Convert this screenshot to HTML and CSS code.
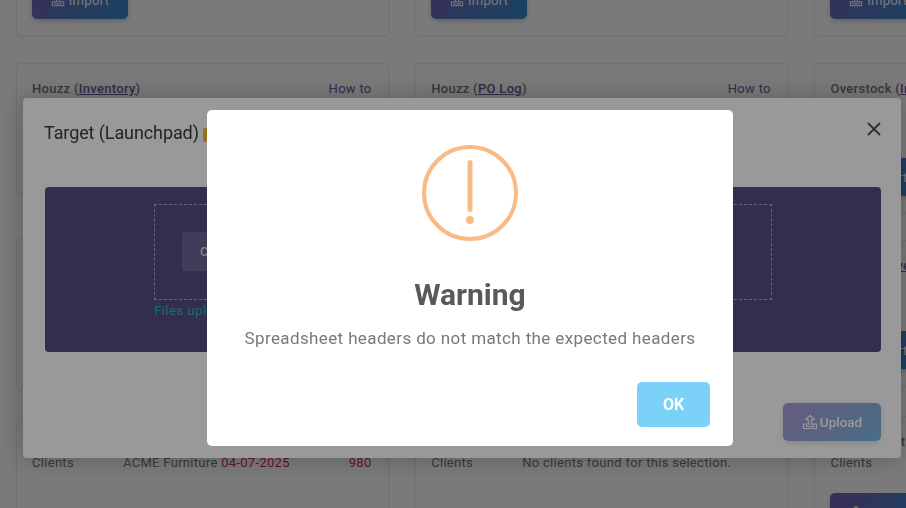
FILE: index.html
```html
<!DOCTYPE html>
<html lang="en">
<head>
    <meta charset="UTF-8">
    <meta name="viewport" content="width=device-width, initial-scale=1.0">
    <title>Imports</title>
    <link rel="stylesheet" href="styles.css">
</head>
<body>
    <svg class="icon-defs" width="0" height="0">
        <symbol id="icon-import" viewBox="0 0 16 16">
            <path d="M8 1.5 3.8 5.5h2.4v4.5h3.6V5.5h2.4z M1.5 10h3v2.5h7V10h3v4.5h-13z" fill="none" stroke="currentColor" stroke-width="1.2" stroke-linejoin="round"/>
        </symbol>
    </svg>

    <main class="board">
        <div class="column">
            <div class="card card-short">
                <div class="card-head"><span>Walmart (<a href="#">Inventory</a>)</span><a class="how-to" href="#">How to</a></div>
                <button class="btn-import"><svg class="icon"><use href="#icon-import"/></svg>Import</button>
            </div>
            <div class="card card-short">
                <div class="card-head"><span>Houzz (<a href="#">Inventory</a>)</span><a class="how-to" href="#">How to</a></div>
                <div class="card-row"><span class="row-label">Clients</span><span>No clients found for this selection.</span></div>
            </div>
            <div class="card card-mid push-down">
                <div class="card-head"><span>Lowes (<a href="#">Inventory</a>)</span><a class="how-to" href="#">How to</a></div>
            </div>
            <div class="card card-last">
                <div class="card-head"><span>Target (<a href="#">Launchpad</a>)</span><a class="how-to" href="#">How to</a></div>
                <div class="card-row"><span class="row-label">Clients</span><span>ACME Furniture <span class="pink">04-07-2025</span></span><span class="row-count pink">980</span></div>
            </div>
        </div>

        <div class="column">
            <div class="card card-short">
                <div class="card-head"><span>Walmart (<a href="#">PO Log</a>)</span><a class="how-to" href="#">How to</a></div>
                <button class="btn-import"><svg class="icon"><use href="#icon-import"/></svg>Import</button>
            </div>
            <div class="card card-short">
                <div class="card-head"><span>Houzz (<a href="#">PO Log</a>)</span><a class="how-to" href="#">How to</a></div>
            </div>
            <div class="card card-mid push-down">
                <div class="card-head"><span>Lowes (<a href="#">PO Log</a>)</span><a class="how-to" href="#">How to</a></div>
            </div>
            <div class="card card-last">
                <div class="card-head"><span>Target (<a href="#">PO Log</a>)</span><a class="how-to" href="#">How to</a></div>
                <div class="card-row"><span class="row-label">Clients</span><span>No clients found for this selection.</span></div>
            </div>
        </div>

        <div class="column">
            <div class="card card-short">
                <div class="card-head"><span>Wayfair (<a href="#">PO Log</a>)</span></div>
                <button class="btn-import"><svg class="icon"><use href="#icon-import"/></svg>Import</button>
            </div>
            <div class="card card-tall">
                <div class="card-head"><span>Overstock (<a href="#">Inventory</a>)</span></div>
                <button class="btn-import"><svg class="icon"><use href="#icon-import"/></svg>Import</button>
            </div>
            <div class="card card-third">
                <div class="card-head"><span>Wayfair (<a href="#">Inventory</a>)</span></div>
                <button class="btn-import"><svg class="icon"><use href="#icon-import"/></svg>Import</button>
            </div>
            <div class="card card-last card-shifted">
                <div class="card-head"><span>Sears Outlet (<a href="#">Inventory</a>)</span></div>
                <div class="card-row"><span class="row-label">Clients</span></div>
                <button class="btn-import btn-low"><svg class="icon"><use href="#icon-import"/></svg>Import</button>
            </div>
        </div>
    </main>

    <div class="backdrop">
        <section class="modal">
            <header class="modal-head">
                <h2 class="modal-title">Target (Launchpad) <span class="badge">Beta</span></h2>
                <svg class="modal-close" viewBox="0 0 14 14"><path d="M1 1l12 12M13 1 1 13" stroke="currentColor" stroke-width="1.8" fill="none"/></svg>
            </header>
            <div class="dropzone">
                <div class="dropzone-box">
                    <button class="btn-choose">Choose File</button>
                </div>
                <p class="dropzone-note">Files uploaded here must be spreadsheets</p>
            </div>
            <footer class="modal-foot">
                <button class="btn-upload"><svg class="icon icon-large"><use href="#icon-import"/></svg>Upload</button>
            </footer>
        </section>
    </div>

    <div class="alert-backdrop">
        <div class="alert">
            <svg class="alert-icon" viewBox="0 0 96 96">
                <circle cx="48" cy="48" r="46" fill="none" stroke="#f8bb86" stroke-width="4"/>
                <path d="M48 17.5v47" stroke="#f8bb86" stroke-width="5" stroke-linecap="round" fill="none"/>
                <circle cx="48" cy="75" r="4" fill="#f8bb86"/>
            </svg>
            <h2 class="alert-title">Warning</h2>
            <p class="alert-text">Spreadsheet headers do not match the expected headers</p>
            <div class="alert-actions"><button class="btn-ok">OK</button></div>
        </div>
    </div>
</body>
</html>
```

FILE: styles.css
```css
* {
    box-sizing: border-box;
}
body {
    font-family: Roboto, "Liberation Sans", sans-serif;
    font-size: 13px;
    line-height: 16px;
    letter-spacing: 0.3px;
    color: #787880;
    background-color: #fff;
    margin: 0;
    height: 508px;
    overflow: hidden;
}
a {
    color: #6f5a9e;
}
button {
    font-family: inherit;
    border: none;
}
.icon-defs {
    display: block;
}
.icon {
    width: 14px;
    height: 14px;
    margin-right: 4px;
}
.icon-large {
    width: 16px;
    height: 16px;
    margin-right: 2px;
}

/* page behind the dialogs */
.board {
    display: flex;
    gap: 26.6px;
    padding: 0 16px;
    margin-top: -94px;
    width: 1300px;
}
.column {
    width: 372.6px;
    display: flex;
    flex-direction: column;
    gap: 27px;
}
.card {
    background-color: #fff;
    border: 1px solid #ebebeb;
    border-radius: 4px;
    box-shadow: 0 1px 3px rgba(0, 0, 0, 0.06);
    padding: 17px 16px 16px 15px;
    display: flex;
    flex-direction: column;
}
.card-short {
    height: 130px;
}
.card-mid {
    height: 151px;
}
.card-tall {
    height: 150px;
}
.card-third {
    height: 146px;
}
.card-last {
    height: 160px;
    margin-top: -1px;
}
.card-shifted {
    margin-top: 3px;
}
.push-down {
    margin-top: 19px;
}
.card-head {
    display: flex;
    justify-content: space-between;
    margin-bottom: 5px;
}
.card-head span {
    font-weight: 500;
}
.how-to {
    text-decoration: none;
}
.card-row {
    display: flex;
}
.row-label {
    width: 91px;
    flex-shrink: 0;
}
.row-count {
    margin-left: auto;
}
.pink {
    color: #d81b78;
}
.btn-import {
    margin-top: auto;
    flex-shrink: 0;
    width: 96px;
    height: 38px;
    color: #fff;
    font-size: 13px;
    letter-spacing: 0.3px;
    border-radius: 5px;
    background: linear-gradient(135deg, #7f5fb8, #2f8fcf);
    box-shadow: 0 2px 5px rgba(0, 0, 0, 0.2);
    display: flex;
    align-items: center;
    justify-content: center;
}
.btn-low {
    margin-top: 22px;
}

/* first dialog */
.backdrop {
    position: fixed;
    inset: 0;
    background-color: rgba(0, 0, 0, 0.2);
}
.modal {
    position: absolute;
    left: 23px;
    top: 98px;
    width: 878px;
    height: 360px;
    background-color: #fff;
    border-radius: 4px;
    box-shadow: 0 0 24px rgba(0, 0, 0, 0.25);
    padding: 0 20px 17px 22px;
    display: flex;
    flex-direction: column;
}
.modal-head {
    height: 89px;
    display: flex;
    justify-content: space-between;
    padding-top: 24px;
}
.modal-title {
    margin: 0 0 0 -1px;
    font-size: 18px;
    line-height: 22px;
    font-weight: 400;
    letter-spacing: -0.1px;
    color: #3c3c3c;
}
.badge {
    background-color: #ffbb33;
    color: #fff;
    font-size: 12px;
    padding: 0 6px;
    border-radius: 2px;
}
.modal-close {
    width: 14px;
    height: 14px;
    color: #505050;
}
.dropzone {
    background-color: #554d82;
    border-radius: 4px;
    height: 165px;
    padding: 17px 109px 0;
}
.dropzone-box {
    height: 96px;
    border: 1px dashed rgba(255, 255, 255, 0.5);
    padding: 27px;
}
.btn-choose {
    height: 39px;
    width: 130px;
    padding: 0 18px;
    text-align: left;
    background-color: rgba(255, 255, 255, 0.14);
    color: #ddd;
    font-size: 13px;
    font-weight: 500;
    border-radius: 3px;
}
.dropzone-note {
    margin: 2px 0 0;
    font-size: 13.5px;
    color: #2bb5b0;
}
.modal-foot {
    margin-top: auto;
    display: flex;
    justify-content: flex-end;
}
.btn-upload {
    width: 98px;
    height: 38px;
    color: #fff;
    font-size: 13.5px;
    font-weight: 500;
    letter-spacing: 0;
    border-radius: 5px;
    background: linear-gradient(135deg, #7f5fb8, #2f8fcf);
    box-shadow: 0 2px 6px rgba(0, 0, 0, 0.2);
    opacity: 0.65;
    display: flex;
    align-items: center;
    justify-content: center;
}

/* warning on top */
.alert-backdrop {
    position: fixed;
    inset: 0;
    background-color: rgba(0, 0, 0, 0.4);
}
.alert {
    position: absolute;
    left: 207px;
    top: 110px;
    width: 526px;
    height: 336px;
    background-color: #fff;
    border-radius: 5px;
    padding-top: 35px;
    text-align: center;
}
.alert-icon {
    display: block;
    width: 96px;
    height: 96px;
    margin: 0 auto;
}
.alert-title {
    margin: 36px 0 0;
    font-size: 30px;
    line-height: 36px;
    font-weight: 700;
    letter-spacing: 0;
    color: #595959;
}
.alert-text {
    margin: 13px 0 0;
    font-size: 17px;
    line-height: 24px;
    letter-spacing: 0.38px;
    color: #797979;
}
.alert-actions {
    margin-top: 32px;
    padding-right: 23px;
    display: flex;
    justify-content: flex-end;
}
.btn-ok {
    width: 73px;
    height: 45px;
    background-color: #7cd1f9;
    color: #fff;
    font-size: 16px;
    font-weight: 700;
    letter-spacing: 0;
    border-radius: 5px;
}
```
